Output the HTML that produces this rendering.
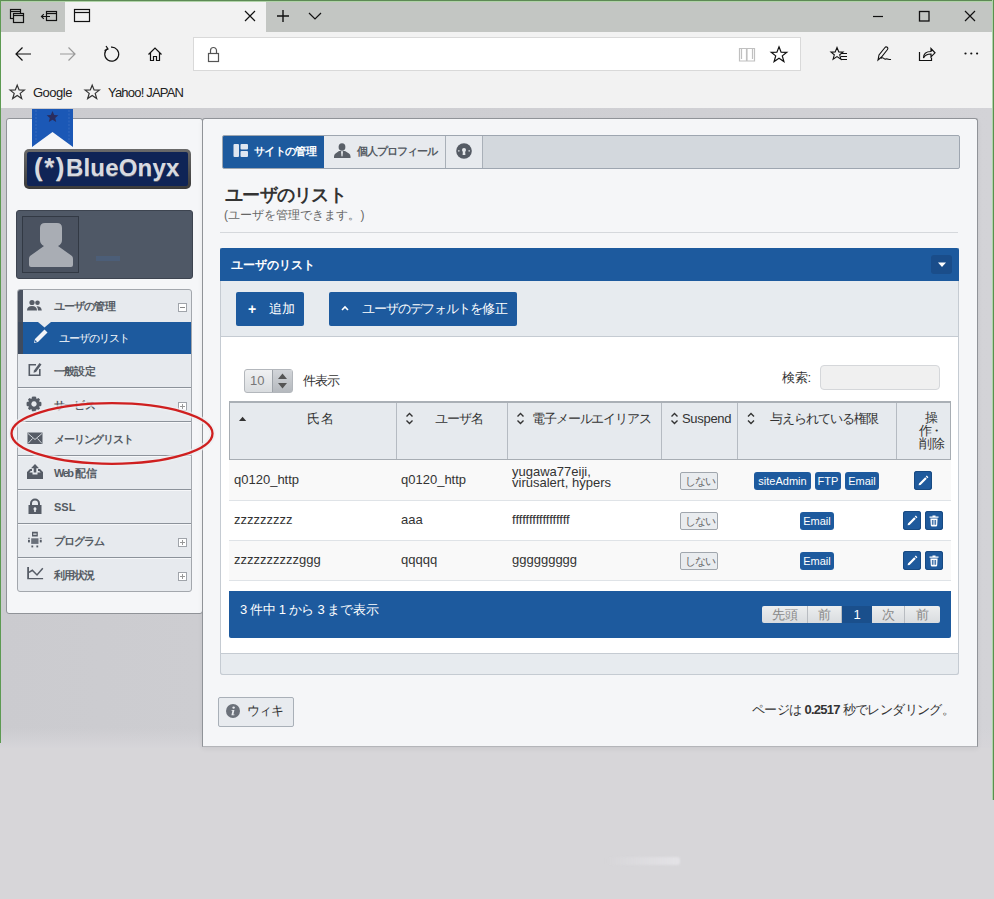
<!DOCTYPE html>
<html><head><meta charset="utf-8">
<style>
*{box-sizing:border-box;margin:0;padding:0}
html,body{width:994px;height:899px;overflow:hidden;background:#d7d6d9;font-family:"Liberation Sans",sans-serif;color:#333}
.a{position:absolute}
svg{display:block}
</style></head><body>
<!-- ===== page background ===== -->
<div class="a" style="left:0;top:108px;width:994px;height:640px;background:linear-gradient(90deg,#cbcbcf 0,#cdcdd1 200px,#d0d0d4 700px,#d3d3d7 994px)"></div><div class="a" style="left:0;top:728px;width:994px;height:20px;background:linear-gradient(180deg,rgba(214,213,217,0),#d6d5d9)"></div>

<div class="a" style="left:605px;top:857px;width:75px;height:8px;border-radius:3px;filter:blur(1px);background:linear-gradient(90deg,rgba(232,231,235,0),rgba(232,231,235,0.75))"></div>
<!-- ===== browser chrome ===== -->
<div class="a" style="left:0;top:0;width:994px;height:32px;background:#c3c6c3"></div>
<div class="a" style="left:65px;top:1px;width:201px;height:31px;background:#f2f2f2"></div>
<div class="a" style="left:0;top:32px;width:994px;height:76px;background:#f2f2f2"></div>
<div class="a" style="left:193px;top:37px;width:608px;height:34px;background:#fff;border:1px solid #d9d9d9"></div>

<svg class="a" style="left:0;top:0" width="994" height="108" viewBox="0 0 994 108" fill="none" stroke="#111" stroke-width="1.2">
 <!-- tabs aside -->
 <rect x="10.5" y="9.5" width="10" height="9"/>
 <rect x="13.5" y="13.5" width="10" height="9" fill="#c3c6c3"/>
 <line x1="13.5" y1="15.5" x2="23.5" y2="15.5"/>
 <line x1="10.5" y1="11.5" x2="20.5" y2="11.5"/>
 <!-- set aside -->
 <rect x="46.5" y="11.5" width="10" height="9"/>
 <line x1="46.5" y1="13.5" x2="56.5" y2="13.5"/>
 <path d="M41.5 16.5 H50 M43.8 14.2 L41.5 16.5 L43.8 18.8"/>
 <!-- tab icon -->
 <rect x="74.5" y="9.5" width="15" height="12"/>
 <line x1="74.5" y1="12.5" x2="89.5" y2="12.5"/>
 <!-- tab close -->
 <path d="M245 11 L255 21 M255 11 L245 21"/>
 <!-- new tab + -->
 <path d="M283 10 V22 M277 16 H289" stroke-width="1.4"/>
 <!-- chevron -->
 <path d="M309 13 L315 19 L321 13"/>
 <!-- window controls -->
 <path d="M873 16.5 H883"/>
 <rect x="919.5" y="11.5" width="9.5" height="9.5" stroke-width="1.3"/>
 <path d="M965 11 L975 21 M975 11 L965 21"/>
 <!-- back -->
 <path d="M16 54 H31 M22.5 47.5 L16 54 L22.5 60.5"/>
 <!-- forward -->
 <path d="M60 54 H75 M68.5 47.5 L75 54 L68.5 60.5" stroke="#9a9a9a"/>
 <!-- refresh -->
 <path d="M107.6 48.5 A7 7 0 1 0 111 47.2"/>
 <path d="M106 46 L108 49 L104.5 50.5" />
 <!-- home -->
 <path d="M148.5 54.5 L155 48 L161.5 54.5 M150.5 52.5 V60.5 H153.5 V56.5 H156.5 V60.5 H159.5 V52.5" />
 <!-- lock -->
 <rect x="208.5" y="53.5" width="10" height="8" stroke="#555"/>
 <path d="M210.5 53.5 V50.5 A3 3 0 0 1 216.5 50.5 V53.5" stroke="#555"/>
 <!-- reading view -->
 <path d="M739.5 48.5 H746.5 V61 H739.5 Z M747 48.5 H754.5 V61 H747 Z M741.5 48.5 V59 M752.5 48.5 V59" stroke="#c0c0c0"/>
 <!-- star -->
 <path d="M779 46.8 L781.1 52.2 L786.8 52.3 L782.3 55.9 L783.9 61.5 L779 58.2 L774.1 61.5 L775.7 55.9 L771.2 52.3 L776.9 52.2 Z"/>
 <!-- hub -->
 <path d="M837 47.5 L838.8 52 L843 52.1 L839.7 54.8 L840.9 59.2 L837 56.6 L833.1 59.2 L834.3 54.8 L831 52.1 L835.2 52 Z" stroke-width="1.1"/>
 <path d="M841 53.5 H847 M841 56.5 H847 M841 59.5 H847" stroke-width="1.1"/>
 <!-- pen -->
 <path d="M878 60 L879 55 L885 47.5 A1.5 1.5 0 0 1 887.5 49.5 L881.5 57 Z M881 58.5 C883 56 884 60 886 59 C887.5 58.3 889 60 891 59.5" stroke-width="1.1"/>
 <!-- share -->
 <path d="M919.5 52 V60.5 H931.5 V57.5" />
 <path d="M923.5 58 C923.5 53 926.5 51.5 931 51.5 V48.5 L935 52.8 L931 56.8 V54 C927.5 54 925 55 923.5 58 Z"/>
 <!-- dots -->
 <circle cx="965.5" cy="53.5" r="1.1" fill="#111" stroke="none"/>
 <circle cx="971.3" cy="53.5" r="1.1" fill="#111" stroke="none"/>
 <circle cx="977.1" cy="53.5" r="1.1" fill="#111" stroke="none"/>
 <!-- fav stars -->
 <path d="M17.2 85.2 L19.1 90 L24.3 90.1 L20.2 93.4 L21.7 98.5 L17.2 95.5 L12.7 98.5 L14.2 93.4 L10.1 90.1 L15.3 90 Z" stroke="#333"/>
 <path d="M92.2 85.2 L94.1 90 L99.3 90.1 L95.2 93.4 L96.7 98.5 L92.2 95.5 L87.7 98.5 L89.2 93.4 L85.1 90.1 L90.3 90 Z" stroke="#333"/>
</svg>
<div class="a" style="left:33px;top:85px;font-size:13px;color:#222;line-height:16px;letter-spacing:-0.5px">Google</div>
<div class="a" style="left:108px;top:85px;font-size:13px;color:#222;line-height:16px;letter-spacing:-0.8px">Yahoo! JAPAN</div>

<!-- green window border -->
<div class="a" style="left:0;top:0;width:994px;height:1px;background:#5d8a55"></div>
<div class="a" style="left:0;top:1px;width:994px;height:1px;background:#b0d4a8"></div>
<div class="a" style="left:0;top:0;width:1px;height:743px;background:#5d9a52"></div>
<div class="a" style="left:992px;top:0;width:1px;height:800px;background:#b0d4a8"></div>
<div class="a" style="left:993px;top:0;width:1px;height:800px;background:#5a8f50"></div>

<!-- ===== sidebar panel ===== -->
<div class="a" style="left:6px;top:118px;width:197px;height:496px;background:#f5f6f8;border:1px solid #909398;border-radius:3px"></div>

<!-- ribbon -->
<svg class="a" style="left:31px;top:108px" width="44" height="42" viewBox="0 0 44 42">
 <path d="M1 1 H42 V39 L21.5 24 L1 39 Z" fill="#1b58b6"/>
 <path d="M5 2 V34 M38 2 V34" stroke="#3f72c2" stroke-width="0.8" stroke-dasharray="2 1.5" fill="none"/>
 <path d="M21.5 3 L23.2 6.9 L27.3 7.2 L24.2 9.9 L25.2 13.9 L21.5 11.7 L17.8 13.9 L18.8 9.9 L15.7 7.2 L19.8 6.9 Z" fill="#2a2d5e"/>
</svg>
<!-- logo -->
<div class="a" style="left:24px;top:149px;width:167px;height:40px;border-radius:5px;background:linear-gradient(#6a6a6a,#3a3a3a);"></div>
<div class="a" style="left:27px;top:152px;width:161px;height:34px;border-radius:2px;background:#0f2456;"></div>
<div class="a" style="left:34px;top:147.5px;width:160px;height:38px;line-height:38px;font-size:24px;font-weight:bold;color:#d8dae0;white-space:nowrap;text-shadow:0 1px 0 #5a6070"><span style="font-size:26px;letter-spacing:1.5px">(*)</span><span style="letter-spacing:0.2px">BlueOnyx</span></div>
<!-- user box -->
<div class="a" style="left:16px;top:210px;width:177px;height:69px;background:#4f5866;border:1px solid #3d4450;border-radius:3px"></div>
<div class="a" style="left:22px;top:216px;width:57px;height:57px;background:#4a5260;border:1px solid #323944"></div>
<svg class="a" style="left:0;top:0" width="100" height="300" viewBox="0 0 100 300">
 <path d="M45 223 H57 Q62 223 62 228 V240 Q62 244 58 246 L72 256 Q73 257 73 259 V265 Q73 267 71 267 H31 Q29 267 29 265 V259 Q29 257 30 256 L44 246 Q40 244 40 240 V228 Q40 223 45 223 Z" fill="#a9adb4"/>
</svg>
<div class="a" style="left:96px;top:256px;width:24px;height:5px;background:rgba(70,120,185,0.22);filter:blur(0.6px)"></div>
<!-- nav menu -->
<div class="a" style="left:17px;top:289px;width:175px;height:303px;background:#e7eaee;border:1px solid #a3a7ad;border-radius:3px;overflow:hidden">
 <div class="a" style="left:0;top:0;width:5px;height:64px;background:#4a5260"></div>
 <div class="a" style="left:0;top:32px;width:174px;height:32px;background:#1d5a9e"></div>
 <div class="a" style="left:0;top:32px;width:5px;height:32px;background:#3f4b5e"></div>
 <svg class="a" style="left:20px;top:32px" width="13" height="6" viewBox="0 0 13 6"><path d="M0 0 H13 L6.5 5.5 Z" fill="#e7eaee"/></svg>
 <div class="a" style="left:36px;top:7.5px;line-height:16px;font-size:11px;font-weight:bold;color:#555b63;white-space:nowrap;width:60px;letter-spacing:-1.5px;text-align:justify;text-align-last:justify">ユーザの管理</div>
<div class="a" style="left:160px;top:13.0px;width:9px;height:9px;background:#fff;border:1px solid #a0a4aa"><div class="a" style="left:1px;top:3px;width:5px;height:1px;background:#888"></div></div>
<div class="a" style="left:41px;top:40px;line-height:16px;font-size:11px;color:#fff;white-space:nowrap;width:69.5px;letter-spacing:-1.5px;text-align:justify;text-align-last:justify">ユーザのリスト</div>
<div class="a" style="left:36px;top:72.5px;line-height:16px;font-size:11px;font-weight:bold;color:#555b63;white-space:nowrap;width:40px;letter-spacing:-1.5px;text-align:justify;text-align-last:justify">一般設定</div>
<div class="a" style="left:36px;top:106.5px;line-height:16px;font-size:11px;font-weight:bold;color:#555b63;white-space:nowrap;width:40px;letter-spacing:-1.5px;text-align:justify;text-align-last:justify">サービス</div>
<div class="a" style="left:160px;top:112.0px;width:9px;height:9px;background:#fff;border:1px solid #a0a4aa"><div class="a" style="left:1px;top:3px;width:5px;height:1px;background:#999"></div><div class="a" style="left:3px;top:1px;width:1px;height:5px;background:#999"></div></div>
<div class="a" style="left:36px;top:140.5px;line-height:16px;font-size:11px;font-weight:bold;color:#555b63;white-space:nowrap;width:78.6px;letter-spacing:-1.5px;text-align:justify;text-align-last:justify">メーリングリスト</div>
<div class="a" style="left:36px;top:174.5px;line-height:16px;font-size:11px;font-weight:bold;color:#555b63;white-space:nowrap;width:42px;letter-spacing:-1.5px;text-align:justify;text-align-last:justify">Web配信</div>
<div class="a" style="left:36px;top:208.5px;line-height:16px;font-size:11px;font-weight:bold;color:#555b63;white-space:nowrap">SSL</div>
<div class="a" style="left:36px;top:242.5px;line-height:16px;font-size:11px;font-weight:bold;color:#555b63;white-space:nowrap;width:49.4px;letter-spacing:-1.5px;text-align:justify;text-align-last:justify">プログラム</div>
<div class="a" style="left:160px;top:248.0px;width:9px;height:9px;background:#fff;border:1px solid #a0a4aa"><div class="a" style="left:1px;top:3px;width:5px;height:1px;background:#999"></div><div class="a" style="left:3px;top:1px;width:1px;height:5px;background:#999"></div></div>
<div class="a" style="left:36px;top:276.5px;line-height:16px;font-size:11px;font-weight:bold;color:#555b63;white-space:nowrap;width:39.4px;letter-spacing:-1.5px;text-align:justify;text-align-last:justify">利用状況</div>
<div class="a" style="left:160px;top:282.0px;width:9px;height:9px;background:#fff;border:1px solid #a0a4aa"><div class="a" style="left:1px;top:3px;width:5px;height:1px;background:#999"></div><div class="a" style="left:3px;top:1px;width:1px;height:5px;background:#999"></div></div>
<div class="a" style="left:0;top:97px;width:174px;height:1px;background:#8c929a"></div><div class="a" style="left:0;top:98px;width:174px;height:1px;background:#f6f7f9"></div>
<div class="a" style="left:0;top:131px;width:174px;height:1px;background:#8c929a"></div><div class="a" style="left:0;top:132px;width:174px;height:1px;background:#f6f7f9"></div>
<div class="a" style="left:0;top:165px;width:174px;height:1px;background:#8c929a"></div><div class="a" style="left:0;top:166px;width:174px;height:1px;background:#f6f7f9"></div>
<div class="a" style="left:0;top:199px;width:174px;height:1px;background:#8c929a"></div><div class="a" style="left:0;top:200px;width:174px;height:1px;background:#f6f7f9"></div>
<div class="a" style="left:0;top:233px;width:174px;height:1px;background:#8c929a"></div><div class="a" style="left:0;top:234px;width:174px;height:1px;background:#f6f7f9"></div>
<div class="a" style="left:0;top:267px;width:174px;height:1px;background:#8c929a"></div><div class="a" style="left:0;top:268px;width:174px;height:1px;background:#f6f7f9"></div>

</div>
<svg class="a" style="left:0;top:280px" width="60" height="320" viewBox="0 280 60 320">
 <g fill="#565c66">
  <!-- users -->
  <circle cx="32" cy="302.5" r="2.6"/>
  <path d="M27 310.5 Q27 306 32 306 Q37 306 37 310.5 Z"/>
  <circle cx="37.5" cy="302.8" r="2.3"/>
  <path d="M36.5 306.2 Q41.5 306 41.8 310.5 H38 Q38 307.5 36.5 306.2 Z"/>
  <!-- edit square -->
  <path d="M28.5 364 H36 V365.6 H30.1 V374.4 H39 V369 H40.6 V376 H28.5 Z"/>
  <path d="M34 370.5 L39.5 363 L41.5 364.5 L36 372 L33.5 372.8 Z"/>
  <!-- gear -->
  <path fill-rule="evenodd" d="M34 396.5 L36 396.8 L36.6 399 L38.5 398 L40 399.5 L39 401.4 L41.2 402 L41.5 404 L41.2 406 L39 406.6 L40 408.5 L38.5 410 L36.6 409 L36 411.2 L34 411.5 L32 411.2 L31.4 409 L29.5 410 L28 408.5 L29 406.6 L26.8 406 L26.5 404 L26.8 402 L29 401.4 L28 399.5 L29.5 398 L31.4 399 L32 396.8 Z M34 401.3 A2.7 2.7 0 1 0 34.01 401.3 Z"/>
  <!-- envelope -->
  <rect x="27.5" y="432.5" width="15" height="11.5"/>
  <path d="M28 433.5 L35 439.5 L42 433.5 M28 443.5 L32.5 438.5 M42 443.5 L37.5 438.5" fill="none" stroke="#dfe3e8" stroke-width="0.9"/>
  <!-- upload tray -->
  <path d="M27 472 L30 469 H32 V471 H30.8 L29.3 472.5 H32.5 V474.5 H37.5 V472.5 H40.7 L39.2 471 H38 V469 H40 L43 472 V479 H27 Z"/>
  <path d="M35 464 L39 468.3 H36.3 V472.5 H33.7 V468.3 H31 Z"/>
  <!-- lock -->
  <path fill-rule="evenodd" d="M28.5 505 H41.5 V514 H28.5 Z M35 507.3 A1.6 1.6 0 0 0 34.2 510.2 V512 H35.8 V510.2 A1.6 1.6 0 0 0 35 507.3 Z"/>
  <path fill="none" stroke="#565c66" stroke-width="2" d="M31 505 V503.5 A4 4 0 0 1 39 503.5 V505"/>
  <!-- robot -->
  <path fill-rule="evenodd" d="M32 531.8 H37.8 V536.6 H32 Z M33.2 533.6 V534.8 H36.6 V533.6 Z"/>
  <rect x="31.2" y="538.3" width="7.3" height="5.6" fill="#6a707a"/>
  <rect x="28" y="539.8" width="1.9" height="2.6"/><rect x="39.8" y="539.8" width="1.9" height="2.6"/>
  <rect x="28" y="537.8" width="1.9" height="0.9"/><rect x="39.8" y="537.8" width="1.9" height="0.9"/>
  <rect x="31.4" y="545.5" width="1.8" height="1.9"/><rect x="36.4" y="545.5" width="1.8" height="1.9"/>
  <!-- chart -->
  <path d="M27.2 567 H29 V577.9 H43.1 V579.3 H27.2 Z"/>
  <path fill="none" stroke="#565c66" stroke-width="1.5" d="M29 572.3 L32.3 570.3 L37 575 L42.8 568.3"/>
 </g>
 <!-- pencil (selected, white) -->
 <path d="M34 343 L35 339 L44.5 329.5 L47.5 332.5 L38 342 Z" fill="#f2f4f8"/>
 <path d="M34.8 342.2 L35.4 340 L37 341.6 Z" fill="#1d5a9e"/>
</svg>


<!-- ===== main panel ===== -->
<div class="a" style="left:202px;top:118px;width:776px;height:629px;background:#f5f6f8;border:1px solid #909398;border-bottom-color:#b4b5b9;border-radius:3px 3px 0 0;box-shadow:0 2px 5px rgba(0,0,0,0.06)"></div>


<!-- tab bar -->
<div class="a" style="left:222px;top:135px;width:738px;height:34px;background:#d3d8dd;border:1px solid #9ea6b0;border-radius:2px;overflow:hidden">
 <div class="a" style="left:0;top:0;width:101px;height:32px;background:#1d5a9e"></div>
 <div class="a" style="left:101px;top:0;width:122px;height:32px;background:#e7eaee;border-right:1px solid #a9b0b8"></div>
 <div class="a" style="left:223px;top:0;width:37px;height:32px;background:#e7eaee;border-right:1px solid #a9b0b8"></div>
 <div class="a" style="left:31px;top:7px;line-height:16px;font-size:11px;font-weight:bold;color:#fff;white-space:nowrap;width:61px;letter-spacing:-1.5px;text-align:justify;text-align-last:justify">サイトの管理</div>
 <div class="a" style="left:134px;top:7px;line-height:16px;font-size:11px;font-weight:bold;color:#555b63;white-space:nowrap;width:79px;letter-spacing:-1.5px;text-align:justify;text-align-last:justify">個人プロフィール</div>
</div>
<svg class="a" style="left:220px;top:130px" width="270" height="40" viewBox="220 130 270 40">
 <rect x="233.5" y="144" width="5.5" height="13" rx="1" fill="#dfe6f0"/>
 <rect x="240.5" y="144" width="7.5" height="5.5" rx="1" fill="#dfe6f0"/>
 <rect x="240.5" y="151" width="7.5" height="6" rx="1" fill="#dfe6f0"/>
 <g fill="#5a6068">
  <ellipse cx="342" cy="147" rx="3.4" ry="3.8"/>
  <path d="M339 151 H345 L349 153.5 Q350.5 154.5 350.5 156.5 V158 H334 V156.5 Q334 154.5 335.5 153.5 Z"/>
 </g>
 <path d="M341 151.3 H343 L342.6 155.5 L342 157 L341.4 155.5 Z" fill="#e7eaee"/>
 <circle cx="464" cy="151" r="7.8" fill="#555b64"/>
 <circle cx="464" cy="150" r="2" fill="#e4e7ea"/>
 <path d="M463 150 H465 L465.4 155 H462.6 Z" fill="#e4e7ea"/>
 <circle cx="458.8" cy="150.8" r="0.9" fill="#c9ced4"/>
 <circle cx="469.2" cy="150.8" r="0.9" fill="#c9ced4"/>
</svg>
<!-- title -->
<div class="a" style="left:225px;top:183px;line-height:24px;font-size:18px;font-weight:bold;color:#333;white-space:nowrap;width:120px;letter-spacing:-1.5px;text-align:justify;text-align-last:justify">ユーザのリスト</div>
<div class="a" style="left:224px;top:207px;line-height:16px;font-size:12px;color:#666;white-space:nowrap;width:140px;letter-spacing:-0.5px;text-align:justify;text-align-last:justify">(ユーザを管理できます。)</div>
<div class="a" style="left:220px;top:232px;width:738px;height:1px;background:#d5d8dc"></div>

<!-- widget -->
<div class="a" style="left:220px;top:248px;width:739px;height:427px;background:#fff;border:1px solid #c5cbd2;border-top:none;border-radius:0 0 3px 3px"></div>
<div class="a" style="left:220px;top:248px;width:739px;height:33px;background:#1d5a9e;border-radius:2px 2px 0 0"></div>
<div class="a" style="left:231px;top:257px;line-height:16px;font-size:12px;font-weight:bold;color:#fff;white-space:nowrap;width:83.6px;letter-spacing:-0.5px;text-align:justify;text-align-last:justify">ユーザのリスト</div>
<div class="a" style="left:931px;top:255px;width:21px;height:19px;background:#1a4d8a;border-radius:3px"></div>
<svg class="a" style="left:937px;top:262px" width="10" height="6" viewBox="0 0 10 6"><path d="M1 0.5 H9 L5 5 Z" fill="#fff"/></svg>
<div class="a" style="left:220px;top:281px;width:739px;height:56px;background:#e7ebef;border:1px solid #c5cbd2;border-top:none"></div>
<div class="a" style="left:236px;top:292px;width:68px;height:34px;background:#1d5a9e;border-radius:2px"></div>
<div class="a" style="left:248px;top:301px;line-height:16px;font-size:14px;font-weight:bold;color:#fff">+</div>
<div class="a" style="left:269px;top:301px;line-height:16px;font-size:13px;color:#fff;white-space:nowrap;width:24px;letter-spacing:-1.5px;text-align:justify;text-align-last:justify">追加</div>
<div class="a" style="left:329px;top:292px;width:188px;height:34px;background:#1d5a9e;border-radius:2px"></div>
<svg class="a" style="left:340px;top:305px" width="10" height="6" viewBox="0 0 10 6"><path d="M2 5 L5 2 L8 5" fill="none" stroke="#fff" stroke-width="1.6"/></svg>
<div class="a" style="left:362px;top:301px;line-height:16px;font-size:13px;color:#fff;white-space:nowrap;width:144px;letter-spacing:-1.5px;text-align:justify;text-align-last:justify">ユーザのデフォルトを修正</div>
<div class="a" style="left:220px;top:653px;width:739px;height:22px;background:#e7ebef;border:1px solid #c5cbd2;border-radius:0 0 3px 3px"></div>

<div class="a" style="left:244px;top:369px;width:49px;height:24px;border:1px solid #b3b7bc;border-radius:3px;background:linear-gradient(#f0f1f2,#d9dcdf);overflow:hidden"></div>
<div class="a" style="left:272px;top:370px;width:20px;height:22px;background:linear-gradient(#d2d5d9,#b5b9be);border-left:1px solid #9ea3a9"></div>
<svg class="a" style="left:276px;top:372px" width="13" height="18" viewBox="0 0 13 18"><path d="M2 7 L6.5 1.5 L11 7 Z M2 11 L6.5 16.5 L11 11 Z" fill="#555"/></svg>
<div class="a" style="left:250px;top:373px;line-height:16px;font-size:13px;color:#777">10</div>
<div class="a" style="left:303px;top:373px;line-height:16px;font-size:13px;color:#333;white-space:nowrap;width:35.5px;letter-spacing:-1.5px;text-align:justify;text-align-last:justify">件表示</div>
<div class="a" style="left:782px;top:370px;line-height:16px;font-size:13px;color:#333;white-space:nowrap;width:28px;letter-spacing:-1px;text-align:justify;text-align-last:justify">検索:</div>
<div class="a" style="left:820px;top:365px;width:120px;height:25px;background:#f0f0f0;border:1px solid #d5d7da;border-radius:4px"></div>
<div class="a" style="left:229px;top:401px;width:722px;height:59px;background:#e6eaee;border:1px solid #a7adb3;border-top:2px solid #aab0b6"></div>
<div class="a" style="left:396px;top:403px;width:1px;height:56px;background:#b5bbc2"></div>
<div class="a" style="left:507px;top:403px;width:1px;height:56px;background:#b5bbc2"></div>
<div class="a" style="left:661px;top:403px;width:1px;height:56px;background:#b5bbc2"></div>
<div class="a" style="left:737px;top:403px;width:1px;height:56px;background:#b5bbc2"></div>
<div class="a" style="left:896px;top:403px;width:1px;height:56px;background:#b5bbc2"></div>
<svg class="a" style="left:229px;top:400px" width="722" height="40" viewBox="229 400 722 40" fill="none" stroke="#333" stroke-width="1.4">
 <path d="M239 421 L242.6 416.8 L246.2 421 Z" fill="#333" stroke="none"/>
 <path d="M406.5 416.5 L409.5 413.5 L412.5 416.5 M406.5 420.5 L409.5 423.5 L412.5 420.5"/>
 <path d="M517.5 416.5 L520.5 413.5 L523.5 416.5 M517.5 420.5 L520.5 423.5 L523.5 420.5"/>
 <path d="M671.5 416.5 L674.5 413.5 L677.5 416.5 M671.5 420.5 L674.5 423.5 L677.5 420.5"/>
 <path d="M748 416.5 L751 413.5 L754 416.5 M748 420.5 L751 423.5 L754 420.5"/>
</svg>
<div class="a" style="left:307px;top:411px;line-height:16px;font-size:13px;color:#333;white-space:nowrap;width:26px;letter-spacing:-0.5px;text-align:justify;text-align-last:justify">氏名</div>
<div class="a" style="left:435px;top:411px;line-height:16px;font-size:13px;color:#333;white-space:nowrap;width:47.6px;letter-spacing:-1.5px;text-align:justify;text-align-last:justify">ユーザ名</div>
<div class="a" style="left:532px;top:411px;line-height:16px;font-size:13px;color:#333;white-space:nowrap;width:118.4px;letter-spacing:-1.5px;text-align:justify;text-align-last:justify">電子メールエイリアス</div>
<div class="a" style="left:682px;top:411px;line-height:16px;font-size:13px;color:#333;white-space:nowrap;letter-spacing:-0.3px">Suspend</div>
<div class="a" style="left:770px;top:411px;line-height:16px;font-size:13px;color:#333;white-space:nowrap;width:107.6px;letter-spacing:-1.5px;text-align:justify;text-align-last:justify">与えられている権限</div>
<div class="a" style="left:925px;top:411px;line-height:13px;font-size:13px;color:#333;white-space:nowrap">操</div><div class="a" style="left:919px;top:424px;line-height:13px;font-size:13px;color:#333;white-space:nowrap;width:21px;letter-spacing:-2.5px;text-align:justify;text-align-last:justify">作・</div><div class="a" style="left:919px;top:437px;line-height:13px;font-size:13px;color:#333;white-space:nowrap;width:23.5px;letter-spacing:-2px;text-align:justify;text-align-last:justify">削除</div>
<div class="a" style="left:229px;top:460px;width:722px;height:41px;background:#f9f9f9;border-bottom:1px solid #dfe3e7"></div>
<div class="a" style="left:229px;top:501px;width:722px;height:40px;background:#ffffff;border-bottom:1px solid #dfe3e7"></div>
<div class="a" style="left:229px;top:541px;width:722px;height:40px;background:#f9f9f9;border-bottom:1px solid #dfe3e7"></div>
<div class="a" style="left:234px;top:472px;line-height:16px;font-size:13px;color:#333;white-space:nowrap">q0120_http</div>
<div class="a" style="left:401px;top:472px;line-height:16px;font-size:13px;color:#333;white-space:nowrap">q0120_http</div>
<div class="a" style="left:512px;top:466px;line-height:11px;font-size:13px;color:#333;white-space:nowrap">yugawa77eiji,<br>virusalert, hypers</div>
<div class="a" style="left:234px;top:512px;line-height:16px;font-size:13px;color:#333;white-space:nowrap">zzzzzzzzz</div>
<div class="a" style="left:401px;top:512px;line-height:16px;font-size:13px;color:#333;white-space:nowrap">aaa</div>
<div class="a" style="left:512px;top:512px;line-height:16px;font-size:13px;color:#333;white-space:nowrap">fffffffffffffffff</div>
<div class="a" style="left:234px;top:552px;line-height:16px;font-size:13px;color:#333;white-space:nowrap">zzzzzzzzzzggg</div>
<div class="a" style="left:401px;top:552px;line-height:16px;font-size:13px;color:#333;white-space:nowrap">qqqqq</div>
<div class="a" style="left:512px;top:552px;line-height:16px;font-size:13px;color:#333;white-space:nowrap">ggggggggg</div>
<div class="a" style="left:680px;top:471.5px;width:38px;height:18px;background:#e9ecef;border:1px solid #a0a6ad;border-radius:2px;line-height:16px;font-size:11px;color:#666;white-space:nowrap"><div class="a" style="left:4px;top:0;width:29px;letter-spacing:-1.5px;text-align:justify;text-align-last:justify">しない</div></div>
<div class="a" style="left:680px;top:511.5px;width:38px;height:18px;background:#e9ecef;border:1px solid #a0a6ad;border-radius:2px;line-height:16px;font-size:11px;color:#666;white-space:nowrap"><div class="a" style="left:4px;top:0;width:29px;letter-spacing:-1.5px;text-align:justify;text-align-last:justify">しない</div></div>
<div class="a" style="left:680px;top:551.5px;width:38px;height:18px;background:#e9ecef;border:1px solid #a0a6ad;border-radius:2px;line-height:16px;font-size:11px;color:#666;white-space:nowrap"><div class="a" style="left:4px;top:0;width:29px;letter-spacing:-1.5px;text-align:justify;text-align-last:justify">しない</div></div>
<div class="a" style="left:754px;top:471.5px;width:57px;height:18px;background:#1d5a9e;border-radius:3px;text-align:center;line-height:18px;font-size:11px;color:#fff;white-space:nowrap">siteAdmin</div>
<div class="a" style="left:815px;top:471.5px;width:26px;height:18px;background:#1d5a9e;border-radius:3px;text-align:center;line-height:18px;font-size:11px;color:#fff;white-space:nowrap">FTP</div>
<div class="a" style="left:845px;top:471.5px;width:34px;height:18px;background:#1d5a9e;border-radius:3px;text-align:center;line-height:18px;font-size:11px;color:#fff;white-space:nowrap">Email</div>
<div class="a" style="left:800px;top:511.5px;width:34px;height:18px;background:#1d5a9e;border-radius:3px;text-align:center;line-height:18px;font-size:11px;color:#fff;white-space:nowrap">Email</div>
<div class="a" style="left:800px;top:551.5px;width:34px;height:18px;background:#1d5a9e;border-radius:3px;text-align:center;line-height:18px;font-size:11px;color:#fff;white-space:nowrap">Email</div>
<div class="a" style="left:914px;top:471px;width:18px;height:19px;background:#1f5a9c;border-radius:3px;box-shadow:inset 0 0 0 1px #184a82"><svg width="18" height="19" viewBox="0 0 18 19"><path d="M4.6 14.2 L5 12.4 L11.2 6.2 L12.8 7.8 L6.6 14 Z M11.8 5.6 L12.8 4.6 L14.4 6.2 L13.4 7.2 Z" fill="#fff"/></svg></div>
<div class="a" style="left:903px;top:511px;width:18px;height:19px;background:#1f5a9c;border-radius:3px;box-shadow:inset 0 0 0 1px #184a82"><svg width="18" height="19" viewBox="0 0 18 19"><path d="M4.6 14.2 L5 12.4 L11.2 6.2 L12.8 7.8 L6.6 14 Z M11.8 5.6 L12.8 4.6 L14.4 6.2 L13.4 7.2 Z" fill="#fff"/></svg></div>
<div class="a" style="left:925px;top:511px;width:18px;height:19px;background:#1f5a9c;border-radius:3px;box-shadow:inset 0 0 0 1px #184a82"><svg width="18" height="19" viewBox="0 0 18 19"><path d="M4.5 5.6 H13.5 V6.8 H4.5 Z M7.5 4.6 H10.5 V5.6 H7.5 Z M5.4 7.6 H12.6 L12.2 14.6 Q12.1 15.4 11.3 15.4 H6.7 Q5.9 15.4 5.8 14.6 Z" fill="#fff"/><path d="M7.4 9 V13.8 M9 9 V13.8 M10.6 9 V13.8" stroke="#1f5a9c" stroke-width="0.9"/></svg></div>
<div class="a" style="left:903px;top:551px;width:18px;height:19px;background:#1f5a9c;border-radius:3px;box-shadow:inset 0 0 0 1px #184a82"><svg width="18" height="19" viewBox="0 0 18 19"><path d="M4.6 14.2 L5 12.4 L11.2 6.2 L12.8 7.8 L6.6 14 Z M11.8 5.6 L12.8 4.6 L14.4 6.2 L13.4 7.2 Z" fill="#fff"/></svg></div>
<div class="a" style="left:925px;top:551px;width:18px;height:19px;background:#1f5a9c;border-radius:3px;box-shadow:inset 0 0 0 1px #184a82"><svg width="18" height="19" viewBox="0 0 18 19"><path d="M4.5 5.6 H13.5 V6.8 H4.5 Z M7.5 4.6 H10.5 V5.6 H7.5 Z M5.4 7.6 H12.6 L12.2 14.6 Q12.1 15.4 11.3 15.4 H6.7 Q5.9 15.4 5.8 14.6 Z" fill="#fff"/><path d="M7.4 9 V13.8 M9 9 V13.8 M10.6 9 V13.8" stroke="#1f5a9c" stroke-width="0.9"/></svg></div>
<div class="a" style="left:229px;top:591px;width:722px;height:47px;background:#1d5a9e;border-radius:0 0 2px 2px"></div>
<div class="a" style="left:240px;top:602px;line-height:16px;font-size:13px;color:#fff;white-space:nowrap;width:138px;letter-spacing:-0.6px;text-align:justify;text-align-last:justify">3 件中 1 から 3 まで表示</div>
<div class="a" style="left:762px;top:606px;width:46px;height:17px;background:linear-gradient(#eceeef,#d9dcdf);border-right:1px solid #b8bcc1;border-radius:2px 0 0 2px;text-align:center;line-height:17px;font-size:13px;color:#888;white-space:nowrap">先頭</div>
<div class="a" style="left:808px;top:606px;width:34px;height:17px;background:linear-gradient(#eceeef,#d9dcdf);border-right:1px solid #b8bcc1;text-align:center;line-height:17px;font-size:13px;color:#888;white-space:nowrap">前</div>
<div class="a" style="left:842px;top:606px;width:30px;height:17px;background:#1a4f8c;text-align:center;line-height:17px;font-size:13px;color:#fff">1</div>
<div class="a" style="left:872px;top:606px;width:33px;height:17px;background:linear-gradient(#eceeef,#d9dcdf);border-right:1px solid #b8bcc1;text-align:center;line-height:17px;font-size:13px;color:#888;white-space:nowrap">次</div>
<div class="a" style="left:905px;top:606px;width:35px;height:17px;background:linear-gradient(#eceeef,#d9dcdf);border-radius:0 2px 2px 0;text-align:center;line-height:17px;font-size:13px;color:#888;white-space:nowrap">前</div>
<!-- wiki + footer -->
<div class="a" style="left:218px;top:697px;width:76px;height:30px;background:#e8ebef;border:1px solid #a9b0b8;border-radius:2px"></div>
<svg class="a" style="left:225px;top:703px" width="16" height="16" viewBox="0 0 16 16"><circle cx="8" cy="8" r="7" fill="#6b717a"/><circle cx="8.6" cy="4.6" r="1.2" fill="#e8ebef"/><path d="M6.6 7 H9.4 L8.4 11.5 H9.6 L9.3 12.3 H6.4 L7.4 7.8 H6.4 Z" fill="#e8ebef"/></svg>
<div class="a" style="left:247px;top:703px;line-height:16px;font-size:13px;color:#333;white-space:nowrap;width:35.3px;letter-spacing:-1.5px;text-align:justify;text-align-last:justify">ウィキ</div>
<div class="a" style="left:752px;top:702px;line-height:16px;font-size:13px;color:#333;white-space:nowrap;width:202px;letter-spacing:-0.8px;text-align:justify;text-align-last:justify">ページは <b>0.2517</b> 秒でレンダリング。</div>


<!-- red annotation -->
<svg class="a" style="left:0;top:390px" width="230" height="90" viewBox="0 390 230 90"><ellipse cx="112" cy="433.5" rx="100.5" ry="30.3" fill="none" stroke="#eceef1" stroke-opacity="0.7" stroke-width="6"/><ellipse cx="112" cy="433.5" rx="100.5" ry="30.3" fill="none" stroke="#cf1f1f" stroke-width="2.3"/></svg>
</body></html>
